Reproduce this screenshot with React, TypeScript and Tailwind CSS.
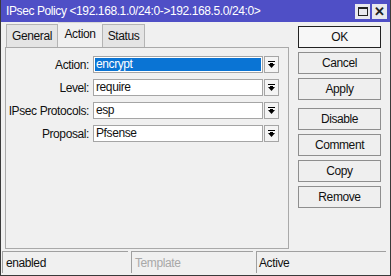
import React from 'react'

const font = { fontFamily: '"Liberation Sans", Arial, sans-serif' }

function DropIcon() {
  return (
    <svg width="9" height="9" viewBox="0 0 9 9">
      <rect x="1" y="1" width="7" height="1" fill="#000" />
      <path d="M1 4 H8 L4.5 8 Z" fill="#000" />
      <rect x="3" y="3" width="3" height="2" fill="#000" />
    </svg>
  )
}

function Row({ label, value, selected }: { label: string; value: string; selected?: boolean }) {
  return (
    <div className="flex items-center h-[17px]">
      <div className="w-[84px] flex justify-end pr-[1px] text-[12px] text-[#111] whitespace-nowrap">{label}</div>
      <div className="ml-[3px] w-[170px] h-[17px] border border-[#a5a5a5] bg-white flex items-center px-[1px]">
        <div
          className={
            selected
              ? 'flex-1 h-[13px] bg-[#0a74d4] text-white text-[12px] leading-[13px] pl-[1px]'
              : 'flex-1 h-[13px] text-[#111] text-[12px] leading-[13px] pl-[1px]'
          }
        >
          {value}
        </div>
      </div>
      <div className="ml-[1px] w-[15px] h-[17px] border border-[#a5a5a5] bg-[#f4f4f4] flex items-center justify-center">
        <DropIcon />
      </div>
    </div>
  )
}

function Btn({ label, primary }: { label: string; primary?: boolean }) {
  return (
    <div
      className={
        primary
          ? 'h-[22px] border border-[#222] bg-[#f7f7f7] flex items-center justify-center text-[12px] text-[#111]'
          : 'h-[22px] border border-[#8e8e8e] bg-[#efefef] flex items-center justify-center text-[12px] text-[#111]'
      }
    >
      {label}
    </div>
  )
}

export default function App() {
  return (
    <div
      className="w-[391px] h-[276px] bg-[#f0f0f0] border-x border-b border-[#3a3a3a] flex flex-col overflow-hidden tracking-[-0.4px]"
      style={font}
    >
      {/* title bar */}
      <div className="h-[22px] bg-[#4f4fc6] flex items-center justify-between pl-[5px] pr-[3px]">
        <span className="text-white text-[12px]">IPsec Policy &lt;192.168.1.0/24:0-&gt;192.168.5.0/24:0&gt;</span>
        <div className="flex gap-[2px]">
          <div className="w-[15px] h-[15px] bg-[#e8e8ee] flex items-center justify-center">
            <div className="w-[10px] h-[9px] border border-[#222] border-t-2" />
          </div>
          <div className="w-[15px] h-[15px] bg-[#e8e8ee] flex items-center justify-center text-[13px] font-bold leading-none text-[#222]">
            ✕
          </div>
        </div>
      </div>

      <div className="flex flex-1">
        {/* left: tabs + panel */}
        <div className="ml-[4px] w-[284px] flex flex-col">
          <div className="h-[25px] flex items-end pl-[1px]">
            <div className="h-[23px] w-[52px] border border-b-0 border-[#b4b4b4] bg-[#e4e4e4] flex items-center justify-center text-[12px] text-[#111]">
              General
            </div>
            <div className="h-[25px] w-[44px] border-t border-[#d8d8d8] bg-[#f0f0f0] flex items-center justify-center text-[12px] text-[#111] pb-[2px]">
              Action
            </div>
            <div className="h-[23px] w-[43px] border border-b-0 border-[#b4b4b4] bg-[#e4e4e4] flex items-center justify-center text-[12px] text-[#111]">
              Status
            </div>
          </div>
          <div className="h-[202px] border border-[#a9a9a9] pt-[8px] flex flex-col gap-[6px]">
            <Row label="Action:" value="encrypt" selected />
            <Row label="Level:" value="require" />
            <Row label="IPsec Protocols:" value="esp" />
            <Row label="Proposal:" value="Pfsense" />
          </div>
        </div>

        {/* right: buttons */}
        <div className="ml-[9px] w-[83px] pt-[4px] flex flex-col">
          <Btn label="OK" primary />
          <div className="mt-[4px] flex flex-col gap-[4px]">
            <Btn label="Cancel" />
            <Btn label="Apply" />
          </div>
          <div className="mt-[8px] flex flex-col gap-[4px]">
            <Btn label="Disable" />
            <Btn label="Comment" />
            <Btn label="Copy" />
            <Btn label="Remove" />
          </div>
        </div>
      </div>

      {/* status bar */}
      <div className="h-[22px] mb-[2px] flex gap-[3px] pl-[1px] pr-[4px]">
        <div className="w-[126px] border-t border-l border-[#a0a0a0] pl-[3px] flex items-center text-[12px] text-[#111]">
          enabled
        </div>
        <div className="w-[122px] border-t border-l border-[#a0a0a0] pl-[3px] flex items-center text-[12px] text-[#a8a8a8]">
          Template
        </div>
        <div className="flex-1 border-t border-l border-[#a0a0a0] pl-[2px] flex items-center text-[12px] text-[#111]">
          Active
        </div>
      </div>
    </div>
  )
}
